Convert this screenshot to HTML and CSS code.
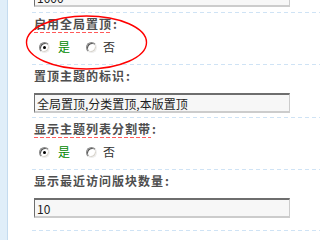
FILE: index.html
```html
<!DOCTYPE html>
<html>
<head>
<meta charset="utf-8">
<link rel="stylesheet" href="styles.css">
</head>
<body>
<div class="page">
  <div class="sidebar"></div>
  <div class="main">
    <div class="row row-first">
      <input class="field" type="text" value="1000">
    </div>
    <div class="row row-radio">
      <div class="label"><span class="mark">启用全局置顶</span><span class="colon">:</span></div>
      <div class="choices">
        <span class="radio checked"></span><span class="opt yes">是</span>
        <span class="radio second"></span><span class="opt no">否</span>
      </div>
    </div>
    <div class="row row-input">
      <div class="label"><span class="plain">置顶主题的标识</span><span class="colon">:</span></div>
      <input class="field" type="text" value="全局置顶,分类置顶,本版置顶">
    </div>
    <div class="row row-radio">
      <div class="label"><span class="mark">显示主题列表分割带</span><span class="colon">:</span></div>
      <div class="choices">
        <span class="radio checked"></span><span class="opt yes">是</span>
        <span class="radio second"></span><span class="opt no">否</span>
      </div>
    </div>
    <div class="row row-input row-last">
      <div class="label"><span class="plain">显示最近访问版块数量</span><span class="colon">:</span></div>
      <input class="field" type="text" value="10">
    </div>
    <div class="row row-end"></div>
  </div>
</div>
<svg class="circle" width="290" height="231" viewBox="0 0 290 231">
  <ellipse cx="86.5" cy="42.5" rx="60" ry="26.5" fill="none" stroke="#ff0000" stroke-width="1.4"/>
</svg>
</body>
</html>
```
FILE: styles.css
```css
html, body {
  margin: 0;
  padding: 0;
  height: 100%;
  overflow: hidden;
  background: #ffffff;
}
body {
  position: relative;
  font-family: "Noto Sans CJK SC", "Liberation Sans", sans-serif;
}
.page {
  display: flex;
  height: 100%;
}
.sidebar {
  width: 7px;
  flex: none;
  background: #e0eef9;
  border-right: 1px solid #c4dbef;
}
.main {
  flex: 1;
  margin-left: 23px;
  margin-top: -13px;
}
.row {
  padding-left: 3px;
  background-image: repeating-linear-gradient(90deg, #cfe3f5 0 4px, transparent 4px 7px);
  background-size: 100% 1px;
  background-repeat: no-repeat;
  background-position: 1px 0;
}
.row-first {
  background-image: none;
  padding-bottom: 5px;
}
.row-radio {
  padding-top: 4px;
  padding-bottom: 8px;
}
.row-input {
  padding-top: 4px;
  padding-bottom: 4px;
}
.row-last {
  padding-bottom: 12px;
}
.row-end {
  height: 10px;
}
.label {
  display: flex;
  align-items: flex-start;
  font-size: 12px;
  font-weight: bold;
  line-height: 16px;
  color: #4e4e4e;
  letter-spacing: 1px;
}
.mark {
  display: inline-block;
  padding-bottom: 1px;
  background-image: repeating-linear-gradient(90deg, #ff5a5a 0 4px, transparent 4px 6px);
  background-size: 100% 1px;
  background-repeat: no-repeat;
  background-position: 0 100%;
}
.plain {
  display: inline-block;
}
.colon {
  margin-left: 1px;
}
.field {
  display: block;
  box-sizing: border-box;
  width: 256px;
  height: 20px;
  margin: 9px 0 0 0;
  padding: 0 2px;
  font-family: "Noto Sans CJK SC", "Liberation Sans", sans-serif;
  font-size: 12px;
  color: #1e1e1e;
  background: #f7f7f7;
  border-style: solid;
  border-width: 2px 1px 2px 1px;
  border-color: #6e6e6e #cccccc #cccccc #6e6e6e;
  outline: none;
}
.row-first .field {
  margin-top: 0;
}
.choices {
  display: flex;
  align-items: center;
  height: 18px;
  margin-top: 5px;
  font-size: 12px;
}
.radio {
  position: relative;
  box-sizing: border-box;
  width: 11px;
  height: 11px;
  margin-left: 5px;
  border-radius: 50%;
  border: 1px solid;
  border-color: #8a8a8a #eeeeee #eeeeee #8a8a8a;
  background: #ffffff;
  box-shadow: inset 1px 1px 0 #5a5a5a, inset -1px -1px 0 #d8d4cc;
}
.radio.second {
  margin-left: 16px;
}
.radio.checked::after {
  content: "";
  position: absolute;
  left: 3px;
  top: 3px;
  width: 3px;
  height: 3px;
  border-radius: 50%;
  background: #000000;
}
.opt {
  line-height: 18px;
}
.yes {
  margin-left: 8px;
  color: #008800;
}
.no {
  margin-left: 6px;
  color: #333333;
}
.circle {
  position: absolute;
  left: 0;
  top: 0;
  pointer-events: none;
}
```
